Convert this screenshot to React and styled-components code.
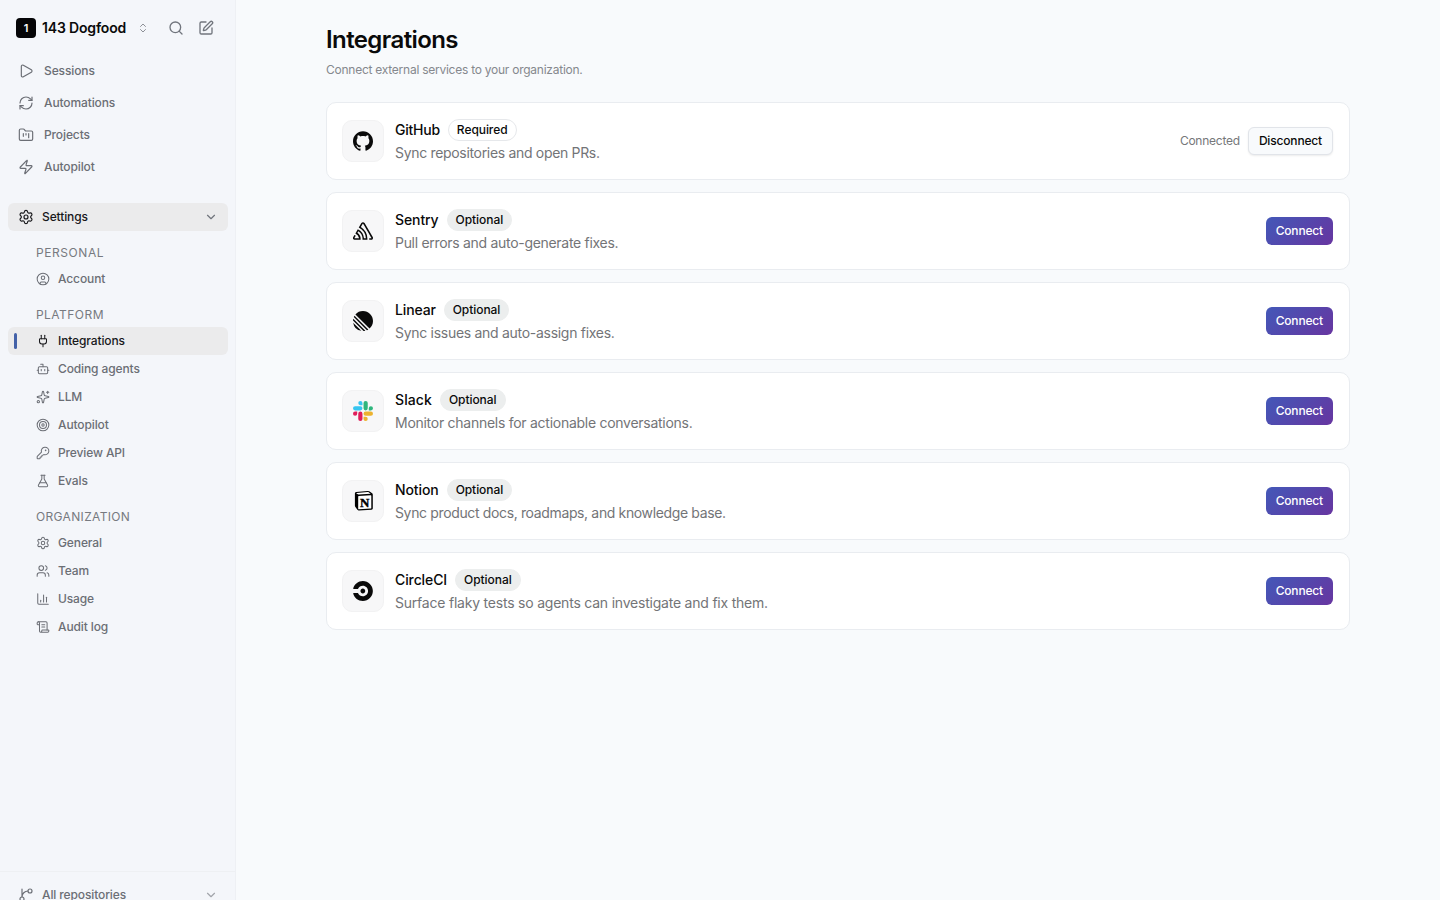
import React from "react";
import styled, { createGlobalStyle } from "styled-components";
import {
  Bot,
  ChartColumn,
  ChevronDown,
  ChevronsUpDown,
  CircleUser,
  FlaskConical,
  FolderKanban,
  KeyRound,
  Play,
  Plug,
  RefreshCw,
  ScrollText,
  Search,
  Settings,
  Sparkles,
  SquarePen,
  Target,
  Users,
  Zap,
} from "lucide-react";
import { SiCircleci, SiGithub, SiLinear, SiSentry } from "react-icons/si";

const GlobalStyle = createGlobalStyle`
  * {
    box-sizing: border-box;
  }

  body {
    margin: 0;
    background: #f8fafc;
    color: #0a0a0a;
    font-family: Inter, "Liberation Sans", sans-serif;
    -webkit-font-smoothing: antialiased;
  }

  h1, p {
    margin: 0;
  }

  button {
    font-family: inherit;
  }
`;

const Page = styled.div`
  display: flex;
  height: 100vh;
  overflow: hidden;
`;

const Sidebar = styled.aside`
  display: flex;
  flex-direction: column;
  flex: none;
  width: 236px;
  background: #f4f6fa;
  border-right: 1px solid #eef0f4;
`;

const Workspace = styled.div`
  display: flex;
  align-items: center;
  height: 55px;
  padding: 1px 21px 0 16px;
  color: #71757d;
`;

const WorkspaceBadge = styled.span`
  display: flex;
  align-items: center;
  justify-content: center;
  width: 20px;
  height: 20px;
  margin-right: 6px;
  border-radius: 4px;
  background: #050507;
  color: #fff;
  font-size: 11px;
  font-weight: 600;
`;

const WorkspaceName = styled.span`
  width: 95px;
  padding-bottom: 2px;
  color: #0a0a0a;
  font-size: 14px;
  font-weight: 600;
  letter-spacing: -0.17px;
  white-space: nowrap;
`;

const WorkspaceActions = styled.div`
  display: flex;
  gap: 14px;
  margin-left: auto;
`;

const Nav = styled.nav`
  display: flex;
  flex-direction: column;
  padding: 0 7px 0 8px;
`;

const Label = styled.span`
  padding-bottom: 2px;
  font-size: 12px;
  font-weight: 500;
  letter-spacing: -0.12px;
`;

const NavItem = styled.a`
  display: flex;
  align-items: center;
  gap: 10px;
  height: 32px;
  padding: 0 10px;
  color: #6b6e75;
`;

const SettingsToggle = styled.div`
  display: flex;
  align-items: center;
  gap: 8px;
  height: 28px;
  margin-top: 20px;
  padding: 0 10px;
  border-radius: 6px;
  background: #ebebec;
  color: #18181b;

  svg:last-child {
    margin-left: auto;
    color: #71757d;
  }
`;

const GroupTitle = styled.div`
  height: 24px;
  margin-top: 10px;
  padding-left: 28px;
  color: #777a80;
  font-size: 12px;
  line-height: 24px;
  letter-spacing: ${(props) => props.$tracking}px;
`;

const SubItem = styled.a`
  position: relative;
  display: flex;
  align-items: center;
  gap: 8px;
  height: 28px;
  padding-left: 28px;
  border-radius: 6px;
  background: ${(props) => (props.$active ? "#ebebec" : "transparent")};
  color: ${(props) => (props.$active ? "#18181b" : "#6b6e75")};
`;

const ActiveMark = styled.span`
  position: absolute;
  left: 6px;
  top: 6px;
  width: 3px;
  height: 16px;
  border-radius: 2px;
  background: #4361a8;
`;

const RepoPicker = styled.div`
  display: flex;
  align-items: center;
  flex: none;
  gap: 8px;
  height: 29px;
  margin-top: auto;
  padding: 18px 17px 0 18px;
  border-top: 1px solid #eef0f3;
  color: #6b6e75;

  svg {
    flex: none;
  }

  svg:last-child {
    margin-left: auto;
    color: #a2a5ab;
  }
`;

const Main = styled.main`
  flex: 1;
  padding: 24px 90px;
`;

const Title = styled.h1`
  font-size: 24px;
  line-height: 32px;
  font-weight: 600;
  letter-spacing: -0.6px;
`;

const Subtitle = styled.p`
  margin-top: 6px;
  color: #85888d;
  font-size: 12px;
  line-height: 16px;
  letter-spacing: -0.25px;
`;

const CardList = styled.div`
  display: flex;
  flex-direction: column;
  gap: 12px;
  margin-top: 24px;
`;

const Card = styled.section`
  display: flex;
  align-items: center;
  height: 78px;
  padding: 0 16px 0 15px;
  border: 1px solid #e9ecf0;
  border-radius: 10px;
  background: #fff;
`;

const LogoTile = styled.div`
  display: flex;
  align-items: center;
  justify-content: center;
  width: 42px;
  height: 42px;
  margin-right: 11px;
  border: 1px solid #f2f2f3;
  border-radius: 10px;
  background: #f7f7f8;
`;

const CardBody = styled.div`
  flex: 1;
`;

const CardHeading = styled.div`
  display: flex;
  align-items: center;
  gap: 8px;
  height: 22px;
`;

const CardName = styled.span`
  padding-bottom: 2px;
  font-size: 14px;
  font-weight: 500;
  letter-spacing: ${(props) => props.$tracking || -0.1}px;
`;

const Badge = styled.span`
  height: 22px;
  padding: 0 8px;
  border: 1px solid ${(props) => (props.$outline ? "#e6e8eb" : "#eceeee")};
  border-radius: 11px;
  background: ${(props) => (props.$outline ? "#fff" : "#eceeee")};
  font-size: 12px;
  line-height: 20px;
  font-weight: 500;
  letter-spacing: -0.06px;
`;

const CardText = styled.p`
  margin-top: 2px;
  color: #737477;
  font-size: 14px;
  line-height: 20px;
  letter-spacing: ${(props) => props.$tracking}px;
`;

const Status = styled.span`
  margin-right: 8px;
  padding-bottom: 2px;
  color: #76777a;
  font-size: 12px;
  letter-spacing: -0.24px;
`;

const Button = styled.button`
  height: 28px;
  padding: 0 10px 2px;
  border: none;
  border-radius: 6px;
  background: linear-gradient(135deg, #4358b8, #6735a0);
  color: #fff;
  font-size: 12px;
  font-weight: 500;
  letter-spacing: -0.17px;
`;

const OutlineButton = styled(Button)`
  border: 1px solid #e1e4e9;
  background: #f8fafc;
  color: #0a0a0a;
  box-shadow: 0 1px 2px rgba(0, 0, 0, 0.08);
`;

const BranchIcon = () => (
  <svg
    width="16"
    height="16"
    viewBox="0 0 24 24"
    fill="none"
    stroke="currentColor"
    strokeWidth="1.75"
    strokeLinecap="round"
    strokeLinejoin="round"
  >
    <path d="M15 6a9 9 0 0 0-9 9V3" />
    <circle cx="18" cy="6" r="3" />
    <circle cx="6" cy="18" r="3" />
  </svg>
);

const SlackLogo = () => (
  <svg width="20" height="20" viewBox="0 0 24 24">
    <path
      fill="#E01E5A"
      d="M5.042 15.165a2.528 2.528 0 0 1-2.52 2.523A2.528 2.528 0 0 1 0 15.165a2.527 2.527 0 0 1 2.522-2.52h2.52v2.52zM6.313 15.165a2.527 2.527 0 0 1 2.521-2.52 2.527 2.527 0 0 1 2.521 2.52v6.313A2.528 2.528 0 0 1 8.834 24a2.528 2.528 0 0 1-2.521-2.522v-6.313z"
    />
    <path
      fill="#36C5F0"
      d="M8.834 5.042a2.528 2.528 0 0 1-2.521-2.52A2.528 2.528 0 0 1 8.834 0a2.528 2.528 0 0 1 2.521 2.522v2.52H8.834zM8.834 6.313a2.528 2.528 0 0 1 2.521 2.521 2.528 2.528 0 0 1-2.521 2.521H2.522A2.528 2.528 0 0 1 0 8.834a2.528 2.528 0 0 1 2.522-2.521h6.312z"
    />
    <path
      fill="#2EB67D"
      d="M18.956 8.834a2.528 2.528 0 0 1 2.522-2.521A2.528 2.528 0 0 1 24 8.834a2.528 2.528 0 0 1-2.522 2.521h-2.522V8.834zM17.688 8.834a2.528 2.528 0 0 1-2.523 2.521 2.527 2.527 0 0 1-2.52-2.521V2.522A2.527 2.527 0 0 1 15.165 0a2.528 2.528 0 0 1 2.523 2.522v6.312z"
    />
    <path
      fill="#ECB22E"
      d="M15.165 18.956a2.528 2.528 0 0 1 2.523 2.522A2.528 2.528 0 0 1 15.165 24a2.527 2.527 0 0 1-2.52-2.522v-2.522h2.52zM15.165 17.688a2.527 2.527 0 0 1-2.52-2.523 2.526 2.526 0 0 1 2.52-2.52h6.313A2.527 2.527 0 0 1 24 15.165a2.528 2.528 0 0 1-2.522 2.523h-6.313z"
    />
  </svg>
);

const NotionLogo = () => (
  <svg width="20" height="20" viewBox="0 0 20 20">
    <path
      fill="#000"
      d="M3.1.9 14.6.1c.9-.1 1.5.1 2.1.5l2.4 1.7c.5.4.7.7.7 1.4v13.4c0 1-.4 1.5-1.4 1.6L6.1 19.5c-.8 0-1.2-.1-1.7-.7l-2-2.8c-.4-.5-.5-.9-.5-1.5V2.4C1.9 1.5 2.3 1 3.1.9z"
    />
    <path
      fill="#fff"
      d="m3.7 1.9 11-.8c.6 0 .8 0 1.2.3l1.5 1.1c.2.2.1.3-.2.3L5.6 3.5c-.6 0-.8-.1-1.2-.4l-.9-.7c-.2-.2-.2-.4.2-.5z"
    />
    <path
      fill="#fff"
      d="m5.7 4.9 12-.7c.4 0 .6.2.6.6v12.1c0 .4-.2.7-.6.7l-11.9.7c-.4 0-.6-.2-.6-.6V5.6c0-.4.2-.7.5-.7z"
    />
    <text
      x="11.8"
      y="15.7"
      textAnchor="middle"
      fontFamily="Liberation Serif, serif"
      fontSize="13"
      fontWeight="700"
      stroke="#000"
      strokeWidth="0.4"
    >
      N
    </text>
  </svg>
);

const mainLinks = [
  { label: "Sessions", Icon: Play },
  { label: "Automations", Icon: RefreshCw },
  { label: "Projects", Icon: FolderKanban },
  { label: "Autopilot", Icon: Zap },
];

const settingsGroups = [
  {
    title: "PERSONAL",
    tracking: 0.56,
    links: [{ label: "Account", Icon: CircleUser }],
  },
  {
    title: "PLATFORM",
    tracking: 0.46,
    links: [
      { label: "Integrations", Icon: Plug, active: true },
      { label: "Coding agents", Icon: Bot },
      { label: "LLM", Icon: Sparkles },
      { label: "Autopilot", Icon: Target },
      { label: "Preview API", Icon: KeyRound },
      { label: "Evals", Icon: FlaskConical },
    ],
  },
  {
    title: "ORGANIZATION",
    tracking: 0.34,
    links: [
      { label: "General", Icon: Settings },
      { label: "Team", Icon: Users },
      { label: "Usage", Icon: ChartColumn },
      { label: "Audit log", Icon: ScrollText },
    ],
  },
];

const integrations = [
  {
    name: "GitHub",
    nameTracking: -0.24,
    text: "Sync repositories and open PRs.",
    tracking: -0.32,
    logo: <SiGithub size={20} />,
    connected: true,
  },
  {
    name: "Sentry",
    text: "Pull errors and auto-generate fixes.",
    tracking: -0.3,
    logo: <SiSentry size={20} />,
  },
  {
    name: "Linear",
    nameTracking: -0.15,
    text: "Sync issues and auto-assign fixes.",
    tracking: -0.29,
    logo: <SiLinear size={20} />,
  },
  {
    name: "Slack",
    nameTracking: 0.1,
    text: "Monitor channels for actionable conversations.",
    tracking: -0.27,
    logo: <SlackLogo />,
  },
  {
    name: "Notion",
    text: "Sync product docs, roadmaps, and knowledge base.",
    tracking: -0.36,
    logo: <NotionLogo />,
  },
  {
    name: "CircleCI",
    text: "Surface flaky tests so agents can investigate and fix them.",
    tracking: -0.215,
    logo: <SiCircleci size={20} />,
  },
];

export default function App() {
  return (
    <Page>
      <GlobalStyle />
      <Sidebar>
        <Workspace>
          <WorkspaceBadge>1</WorkspaceBadge>
          <WorkspaceName>143 Dogfood</WorkspaceName>
          <ChevronsUpDown size={12} strokeWidth={2} color="#8d9097" />
          <WorkspaceActions>
            <Search size={16} strokeWidth={2} />
            <SquarePen size={16} strokeWidth={2} />
          </WorkspaceActions>
        </Workspace>
        <Nav>
          {mainLinks.map(({ label, Icon }) => (
            <NavItem key={label}>
              <Icon size={16} strokeWidth={1.75} />
              <Label>{label}</Label>
            </NavItem>
          ))}
          <SettingsToggle>
            <Settings size={16} strokeWidth={1.75} />
            <Label>Settings</Label>
            <ChevronDown size={14} strokeWidth={2} />
          </SettingsToggle>
          {settingsGroups.map((group) => (
            <React.Fragment key={group.title}>
              <GroupTitle $tracking={group.tracking}>{group.title}</GroupTitle>
              {group.links.map(({ label, Icon, active }) => (
                <SubItem key={label} $active={active}>
                  {active && <ActiveMark />}
                  <Icon size={14} strokeWidth={1.75} />
                  <Label>{label}</Label>
                </SubItem>
              ))}
            </React.Fragment>
          ))}
        </Nav>
        <RepoPicker>
          <BranchIcon />
          <Label>All repositories</Label>
          <ChevronDown size={14} strokeWidth={2} />
        </RepoPicker>
      </Sidebar>
      <Main>
        <Title>Integrations</Title>
        <Subtitle>Connect external services to your organization.</Subtitle>
        <CardList>
          {integrations.map((item) => (
            <Card key={item.name}>
              <LogoTile>{item.logo}</LogoTile>
              <CardBody>
                <CardHeading>
                  <CardName $tracking={item.nameTracking}>{item.name}</CardName>
                  <Badge $outline={item.connected}>
                    {item.connected ? "Required" : "Optional"}
                  </Badge>
                </CardHeading>
                <CardText $tracking={item.tracking}>{item.text}</CardText>
              </CardBody>
              {item.connected ? (
                <>
                  <Status>Connected</Status>
                  <OutlineButton>Disconnect</OutlineButton>
                </>
              ) : (
                <Button>Connect</Button>
              )}
            </Card>
          ))}
        </CardList>
      </Main>
    </Page>
  );
}
